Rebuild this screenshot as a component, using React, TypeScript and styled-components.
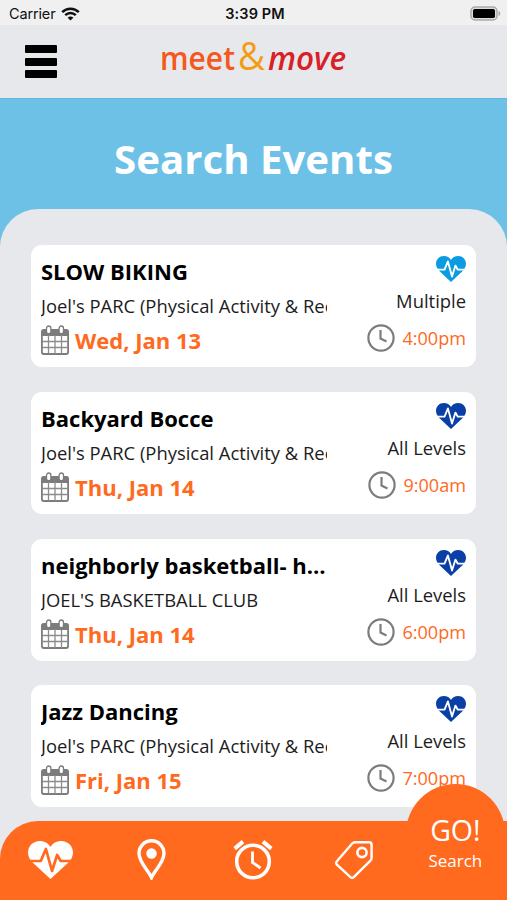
import React from "react";
import styled, { createGlobalStyle } from "styled-components";

const GlobalStyle = createGlobalStyle`
  *, *::before, *::after { box-sizing: border-box; }
  body { margin: 0; font-family: "Open Sans", "Noto Sans", sans-serif; }
`;

const orange = "#ff6a1f";
const panelGray = "#e7e8ec";

const Screen = styled.div`
  position: relative;
  width: 507px;
  height: 900px;
  display: flex;
  flex-direction: column;
  overflow: hidden;
  background: ${panelGray};
`;

const StatusBar = styled.div`
  flex: none;
  height: 25px;
  display: grid;
  grid-template-columns: 1fr auto 1fr;
  align-items: center;
  padding: 2px 6px 0 9px;
  background: #f0f0f0;
  color: #111;
  font: 14.5px Inter, "Liberation Sans", sans-serif;
`;

const Carrier = styled.div`
  display: flex;
  align-items: center;
  gap: 6px;
  letter-spacing: -0.15px;
`;

const Time = styled.div`
  font-weight: 600;
  font-size: 14.5px;
  letter-spacing: 0.1px;
`;

const BatterySlot = styled.div`
  display: flex;
  justify-content: flex-end;
`;

const Header = styled.header`
  flex: none;
  height: 73px;
  display: flex;
  align-items: flex-start;
  padding: 13px 25px 0;
`;

const MenuButton = styled.button`
  width: 32px;
  height: 33px;
  margin-top: 7px;
  padding: 0;
  border: 0;
  background: none;
  display: flex;
  flex-direction: column;
  justify-content: space-between;
`;

const MenuBar = styled.span`
  height: 8px;
  border-radius: 1px;
  background: #000;
`;

const Logo = styled.svg`
  display: block;
  margin-left: 99px;
  overflow: visible;
`;

const Hero = styled.div`
  flex: none;
  height: 160px;
  border-top: 1px solid #61b6dc;
  background: #6dc1e7;
`;

const Title = styled.h1`
  margin: 0;
  padding-top: 32px;
  text-align: center;
  color: #fff;
  font-size: 40.2px;
  line-height: 56px;
  font-weight: 700;
`;

const Panel = styled.main`
  flex: 1;
  min-height: 0;
  margin-top: -49px;
  padding: 36.4px 31px 0;
  border-radius: 38px 38px 0 0;
  background: ${panelGray};
  display: flex;
  flex-direction: column;
  gap: 24.6px;
`;

const Card = styled.article`
  flex: none;
  height: 122px;
  border-radius: 11px;
  background: #fff;
  padding: 9px 10px 0;
  display: flex;
  justify-content: space-between;
`;

const Info = styled.div`
  width: 286px;
`;

const EventName = styled.h2`
  margin: 0;
  font-size: 22px;
  line-height: 34px;
  font-weight: 700;
  white-space: nowrap;
  overflow: hidden;
  text-overflow: ellipsis;
  color: #000;
`;

const Group = styled.div`
  margin-top: 5px;
  font-size: 18.4px;
  line-height: 26px;
  white-space: nowrap;
  overflow: hidden;
  color: #1c1c1c;
`;

const DateRow = styled.div`
  display: flex;
  align-items: center;
  gap: 6px;
  height: 30px;
  margin-top: 6px;
  color: ${orange};
  font-size: 22px;
  font-weight: 700;
`;

const Meta = styled.div`
  display: flex;
  flex-direction: column;
  align-items: flex-end;
  padding-top: 2px;
  font-size: 18.4px;
  color: #1c1c1c;
`;

const Level = styled.div`
  margin-top: 6px;
  line-height: 26px;
`;

const TimeRow = styled.div`
  display: flex;
  align-items: center;
  gap: 7px;
  height: 28px;
  margin-top: 10px;
  font-size: 18.1px;
  color: ${orange};
`;

const TabBar = styled.nav`
  position: absolute;
  left: 0;
  right: 0;
  bottom: 0;
  height: 79px;
  border-radius: 38px 0 0 0;
  background: ${orange};
  display: grid;
  grid-template-columns: repeat(5, 101.2px);
  grid-template-rows: 77px;
  align-items: center;
  justify-items: center;
`;

const Tab = styled.button`
  padding: 0;
  border: 0;
  background: none;
  display: flex;
`;

const GoButton = styled.button`
  width: 99px;
  height: 114px;
  align-self: end;
  padding: 27px 0 0;
  border: 0;
  border-radius: 50px 50px 0 0;
  background: ${orange};
  color: #fff;
  display: flex;
  flex-direction: column;
  align-items: center;
  font-family: inherit;
`;

const GoLabel = styled.span`
  font-size: 28.5px;
  line-height: 38px;
`;

const GoCaption = styled.span`
  font-size: 17px;
  line-height: 24px;
`;

const Wifi = () => (
  <svg width="19" height="14" viewBox="0 0 19 14" fill="none" stroke="#111">
    <path d="M1.2 5.1C5.8.5 13.2.5 17.8 5.1" strokeWidth="2.5" />
    <path d="M4.2 8.1c3-2.9 7.6-2.9 10.6 0" strokeWidth="2.4" />
    <path d="M9.5 13.6 6.6 10.7c1.7-1.5 4.1-1.5 5.8 0z" fill="#111" stroke="none" />
  </svg>
);

const Battery = () => (
  <svg width="31" height="15" viewBox="0 0 31 15">
    <rect x="1" y="1" width="26" height="13" rx="4" fill="#ddd" stroke="#aaa" strokeWidth="1.5" />
    <rect x="3" y="3" width="22" height="9" rx="1.8" fill="#000" />
    <path d="M28.5 5c2.4.6 2.4 4.400 0 5z" fill="#aaa" />
  </svg>
);

const Heart = ({ width, height, color, line }: { width: number; height: number; color: string; line: string }) => (
  <svg width={width} height={height} viewBox="0 0 44 38" preserveAspectRatio="none">
    <path
      d="M22 38 4.5 21.5C1.5 18.5 0 15 0 11.5 0 5 5 0 11.5 0 16 0 20 2.2 22 6 24 2.2 28 0 32.5 0 39 0 44 5 44 11.5c0 3.5-1.5 7-4.5 10z"
      fill={color}
    />
    <path
      d="M0 20h12.5L17.5 8l6 22L28.5 14l3.500 6h12"
      fill="none"
      stroke={line}
      strokeWidth="2.7"
      strokeLinejoin="round"
    />
  </svg>
);

const CalendarIcon = () => (
  <svg width="28" height="30" viewBox="0 0 28 30">
    <rect x="0.9" y="4.8" width="26.2" height="24.2" rx="2" fill="#fff" stroke="#7c7c7c" strokeWidth="1.8" />
    <path d="M2 4.5h24a1.5 1.5 0 0 1 1.5 1.5v5H.5V6A1.5 1.5 0 0 1 2 4.5z" fill="#7c7c7c" />
    <path d="M7.5 10v19M14 10v19M20.5 10v19M1 16.5h26M1 22.5h26" stroke="#8c8c8c" strokeWidth="1.3" />
    <rect x="5.5" y="1" width="4.4" height="7.6" rx="2.2" fill="#fff" stroke="#7c7c7c" strokeWidth="1.3" />
    <rect x="18.1" y="1" width="4.4" height="7.6" rx="2.2" fill="#fff" stroke="#7c7c7c" strokeWidth="1.3" />
  </svg>
);

const ClockIcon = () => (
  <svg width="28" height="28" viewBox="0 0 28 28" fill="none" stroke="#7c7c7c">
    <circle cx="14" cy="14" r="12.6" strokeWidth="2.2" />
    <path d="M13.5 6v8.5l6 3" strokeWidth="2.2" />
  </svg>
);

const PinIcon = () => (
  <svg width="29" height="41" viewBox="0 0 29 41">
    <path
      d="M14.5 38.5C11 31 2 23.5 2 14.300a12.5 12.5 0 0 1 25 0C27 23.5 18 31 14.5 38.5z"
      fill="none"
      stroke="#fff"
      strokeWidth="3.4"
    />
    <circle cx="14.5" cy="14.5" r="5.2" fill="#fff" />
  </svg>
);

const AlarmIcon = () => (
  <svg width="40" height="41" viewBox="0 0 40 41" fill="none" stroke="#fff">
    <circle cx="20" cy="22.5" r="16.3" strokeWidth="3.6" />
    <path d="M19.5 12.5v11l8 5.5" strokeWidth="2.8" />
    <path d="M1.7 9.6 10 2.6M38.3 9.6 30 2.6" strokeWidth="4" />
  </svg>
);

const TagIcon = () => (
  <svg width="38" height="38" viewBox="0 0 38 38" fill="none" stroke="#fff">
    <path
      d="M20 1.3h14a2.6 2.6 0 0 1 2.6 2.6v13a4 4 0 0 1-1.2 2.8L18.8 36.1a2.4 2.4 0 0 1-3.4 0L1.9 23.7a2.4 2.4 0 0 1 0-3.4L17.2 2.5A4 4 0 0 1 20 1.3z"
      strokeWidth="2.4"
    />
    <circle cx="27" cy="11.5" r="4.6" strokeWidth="2.6" />
  </svg>
);

const events = [
  { name: "SLOW BIKING", group: "Joel's PARC (Physical Activity & Recreation Club)", date: "Wed, Jan 13", level: "Multiple", time: "4:00pm", color: "#0b9be0" },
  { name: "Backyard Bocce", group: "Joel's PARC (Physical Activity & Recreation Club)", date: "Thu, Jan 14", level: "All Levels", time: "9:00am", color: "#0a3fa8" },
  { name: "neighborly basketball- half court", group: "JOEL'S BASKETBALL CLUB", date: "Thu, Jan 14", level: "All Levels", time: "6:00pm", color: "#0a3fa8" },
  { name: "Jazz Dancing", group: "Joel's PARC (Physical Activity & Recreation Club)", date: "Fri, Jan 15", level: "All Levels", time: "7:00pm", color: "#0a3fa8" },
];

export default function App() {
  return (
    <Screen>
      <GlobalStyle />
      <StatusBar>
        <Carrier>
          Carrier
          <Wifi />
        </Carrier>
        <Time>3:39 PM</Time>
        <BatterySlot>
          <Battery />
        </BatterySlot>
      </StatusBar>
      <Header>
        <MenuButton aria-label="Menu">
          <MenuBar />
          <MenuBar />
          <MenuBar />
        </MenuButton>
        <Logo width="200" height="44" viewBox="0 0 200 44" fontFamily="Open Sans" fontWeight="600">
          <text x="4" y="31.5" fontSize="32" fill="#f4581c" textLength="75" lengthAdjust="spacingAndGlyphs">meet</text>
          <text x="82" y="31.5" fontSize="38" fontWeight="500" fill="#f39c12" textLength="27" lengthAdjust="spacingAndGlyphs">&amp;</text>
          <text x="112" y="31.5" fontSize="32" fontStyle="italic" fill="#d92027" textLength="78" lengthAdjust="spacingAndGlyphs">move</text>
        </Logo>
      </Header>
      <Hero>
        <Title>Search Events</Title>
      </Hero>
      <Panel>
        {events.map((e) => (
          <Card key={e.name}>
            <Info>
              <EventName>{e.name}</EventName>
              <Group>{e.group}</Group>
              <DateRow>
                <CalendarIcon />
                {e.date}
              </DateRow>
            </Info>
            <Meta>
              <Heart width={30} height={26} color={e.color} line="#fff" />
              <Level>{e.level}</Level>
              <TimeRow>
                <ClockIcon />
                {e.time}
              </TimeRow>
            </Meta>
          </Card>
        ))}
      </Panel>
      <TabBar>
        <Tab aria-label="Activity">
          <Heart width={45} height={38} color="#fff" line={orange} />
        </Tab>
        <Tab aria-label="Places">
          <PinIcon />
        </Tab>
        <Tab aria-label="Schedule">
          <AlarmIcon />
        </Tab>
        <Tab aria-label="Offers">
          <TagIcon />
        </Tab>
        <GoButton>
          <GoLabel>GO!</GoLabel>
          <GoCaption>Search</GoCaption>
        </GoButton>
      </TabBar>
    </Screen>
  );
}
